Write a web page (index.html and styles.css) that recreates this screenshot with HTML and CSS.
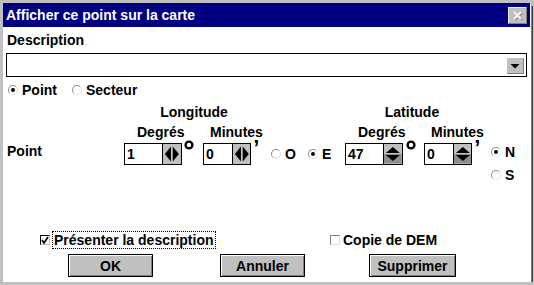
FILE: index.html
```html
<!DOCTYPE html>
<html lang="fr">
<head>
  <meta charset="UTF-8">
  <link rel="stylesheet" href="styles.css">
</head>
<body>
  <div class="dialog">
    <div class="titlebar">
      <span class="title">Afficher ce point sur la carte</span>
      <span class="close">
        <svg width="19" height="17" viewBox="0 0 19 17">
          <rect x="0" y="0" width="19" height="17" fill="#c0c0c0"/>
          <path d="M0 0.5H19M0.5 0V17" stroke="#f0f0f0"/>
          <path d="M18.5 0V17M0 16.5H19" stroke="#808080"/>
          <path d="M6 5L13 12M13 5L6 12" stroke="#909090" stroke-width="2" transform="translate(1 1)"/>
          <path d="M6 5L13 12M13 5L6 12" stroke="#f4f4f4" stroke-width="2"/>
        </svg>
      </span>
    </div>

    <div class="content">
      <div class="label">Description</div>
      <div class="combo">
        <div class="combo-field"></div>
        <span class="combo-btn">
          <svg width="18" height="17" viewBox="0 0 18 17"><path d="M4.5 7H13.5L9 11.5Z" fill="#000"/></svg>
        </span>
      </div>

      <div class="radio-row">
        <label class="radio"><span class="dot on"></span>Point</label>
        <label class="radio"><span class="dot"></span>Secteur</label>
      </div>

      <div class="coords">
        <div class="grp-title long-title">Longitude</div>
        <div class="grp-title lat-title">Latitude</div>

        <div class="sub long-sub"><span class="deg">Degrés</span><span class="min">Minutes</span></div>
        <div class="sub lat-sub"><span class="deg">Degrés</span><span class="min">Minutes</span></div>

        <div class="point-label">Point</div>

        <div class="spins long-spins">
          <div class="field wide">1</div>
          <span class="spin">
            <svg width="19" height="20" viewBox="0 0 19 20"><path d="M8.5 2L2 10L8.5 18Z M10.5 2L17 10L10.5 18Z" fill="#000"/></svg>
          </span>
          <span class="mark"><svg width="21" height="12" viewBox="0 0 21 12"><circle cx="7" cy="5" r="3.4" fill="none" stroke="#000" stroke-width="2.4"/></svg></span>
          <div class="field">0</div>
          <span class="spin">
            <svg width="19" height="20" viewBox="0 0 19 20"><path d="M8.5 2L2 10L8.5 18Z M10.5 2L17 10L10.5 18Z" fill="#000"/></svg>
          </span>
          <span class="mark quote">’</span>
        </div>

        <div class="ew">
          <label class="radio"><span class="dot"></span>O</label>
          <label class="radio"><span class="dot on"></span>E</label>
        </div>

        <div class="spins lat-spins">
          <div class="field wide">47</div>
          <span class="spin">
            <svg width="19" height="20" viewBox="0 0 19 20"><rect x="0" y="10" width="19" height="10" fill="#8c8c8c"/><path d="M2 9L9.5 2.5L17 9Z M2 11L9.5 17.5L17 11Z" fill="#000"/></svg>
          </span>
          <span class="mark"><svg width="21" height="12" viewBox="0 0 21 12"><circle cx="8" cy="5" r="3.4" fill="none" stroke="#000" stroke-width="2.4"/></svg></span>
          <div class="field">0</div>
          <span class="spin">
            <svg width="19" height="20" viewBox="0 0 19 20"><rect x="0" y="10" width="19" height="10" fill="#8c8c8c"/><path d="M2 9L9.5 2.5L17 9Z M2 11L9.5 17.5L17 11Z" fill="#000"/></svg>
          </span>
          <span class="mark quote">’</span>
        </div>

        <label class="radio north"><span class="dot on"></span>N</label>
        <label class="radio south"><span class="dot"></span>S</label>
      </div>

      <div class="check-row">
        <label class="check first">
          <span class="box">
            <svg width="10" height="10" viewBox="0 0 10 10"><path d="M2 5L4 8L8 2" fill="none" stroke="#000" stroke-width="1.6"/></svg>
          </span>
          <span class="focus">Présenter la description</span>
        </label>
        <label class="check second">
          <span class="box"></span>
          <span>Copie de DEM</span>
        </label>
      </div>

      <div class="buttons">
        <button class="btn ok">OK</button>
        <button class="btn cancel">Annuler</button>
        <button class="btn delete">Supprimer</button>
      </div>
    </div>
  </div>
</body>
</html>
```

FILE: styles.css
```css
body {
  margin: 0;
  background: #c0c0c0;
  font-family: "Liberation Sans", Arial, sans-serif;
  font-size: 14px;
  font-weight: bold;
  line-height: 16px;
  color: #000;
}
.dialog {
  margin: 3px 4px 0 3px;
  height: 279px;
  background: #fff;
  display: flex;
  flex-direction: column;
  box-shadow: 1px 1px 0 #fff, 2px 2px 0 #808080, 3px 3px 0 #404040;
}
.titlebar {
  height: 24px;
  background: #000080;
  color: #fff;
  display: flex;
  align-items: center;
  justify-content: space-between;
  padding: 0 3px;
}
.close {
  display: flex;
  margin-top: 1px;
}
.content {
  padding: 0 3px;
}
.label {
  margin-top: 5px;
  padding-left: 1px;
}
.combo {
  margin-top: 5px;
  height: 22px;
  border: 1px solid #000;
  display: flex;
  align-items: center;
  justify-content: flex-end;
  padding-right: 2px;
}
.combo-field {
  flex: 1;
}
.combo-btn {
  display: flex;
  width: 18px;
  height: 17px;
  background: #c0c0c0;
  box-shadow: inset 1px 1px 0 #fff, inset -1px -1px 0 #808080;
}
.radio-row {
  margin-top: 5px;
  display: flex;
  gap: 15px;
  padding-left: 2px;
}
.radio {
  display: flex;
  align-items: center;
  gap: 4px;
}
.dot {
  width: 8px;
  height: 8px;
  border-radius: 50%;
  border: 1px solid #909090;
  border-right-color: #e0e0e0;
  border-bottom-color: #e0e0e0;
  position: relative;
}
.dot.on::after {
  content: "";
  position: absolute;
  left: 2px;
  top: 2px;
  width: 4px;
  height: 4px;
  border-radius: 50%;
  background: #000;
}
.coords {
  margin-top: 6px;
  display: grid;
  grid-template-columns: 118px 146px 75px 146px auto;
  grid-template-rows: 20px 19px 22px auto;
}
.grp-title {
  grid-row: 1;
  text-align: center;
}
.long-title {
  grid-column: 2;
  padding-right: 6px;
}
.lat-title {
  grid-column: 4;
  padding-right: 12px;
}
.sub {
  grid-row: 2;
  display: flex;
}
.long-sub {
  grid-column: 2;
}
.lat-sub {
  grid-column: 4;
}
.sub .deg {
  width: 66px;
  padding-left: 13px;
}
.sub .min {
  padding-left: 7px;
}
.point-label {
  grid-column: 1;
  grid-row: 3;
  padding-left: 1px;
}
.spins {
  grid-row: 3;
  display: flex;
  align-items: stretch;
}
.long-spins {
  grid-column: 2;
}
.lat-spins {
  grid-column: 4;
}
.field {
  width: 26px;
  border: 1px solid #000;
  padding-left: 2px;
  line-height: 20px;
}
.field.wide {
  width: 36px;
}
.spin {
  display: flex;
  width: 19px;
  box-sizing: border-box;
  background: #c0c0c0;
  border: 1px solid #000;
  border-left: 0;
  overflow: hidden;
}
.mark {
  width: 21px;
  margin-top: -4px;
}
.mark.quote {
  width: 19px;
  height: 14px;
  font-size: 22px;
  line-height: 14px;
  margin-top: -2px;
  padding-left: 2px;
  box-sizing: border-box;
}
.ew {
  grid-column: 3;
  grid-row: 3;
  display: flex;
  align-items: center;
  gap: 12px;
  padding-left: 1px;
}
.north {
  grid-column: 5;
  grid-row: 3;
  align-self: start;
  margin-top: 1px;
  padding-left: 0;
}
.south {
  grid-column: 5;
  grid-row: 4;
  margin-top: 2px;
  padding-left: 0;
}
.check-row {
  margin-top: 49px;
  display: flex;
}
.check {
  display: flex;
  align-items: center;
  gap: 3px;
}
.check.first {
  margin-left: 34px;
  width: 290px;
}
.box {
  display: flex;
  width: 10px;
  height: 10px;
  box-sizing: border-box;
  border: 1px solid #000;
  border-right-color: #c0c0c0;
  border-bottom-color: #c0c0c0;
}
.box svg {
  margin: -1px;
}
.second .box {
  border-color: #808080 #e0e0e0 #e0e0e0 #808080;
}
.focus {
  outline: 1px dotted #000;
  padding: 0 1px;
}
.buttons {
  margin-top: 6px;
  display: flex;
  padding-left: 62px;
}
.btn {
  font: inherit;
  height: 23px;
  width: 85px;
  padding: 0;
  background: #c0c0c0;
  border: 1px solid #000;
  box-shadow: inset 1px 1px 0 #fff, inset -1px -1px 0 #808080;
  color: #000;
}
.cancel {
  margin-left: 67px;
}
.delete {
  margin-left: 64px;
  width: 87px;
}
```
